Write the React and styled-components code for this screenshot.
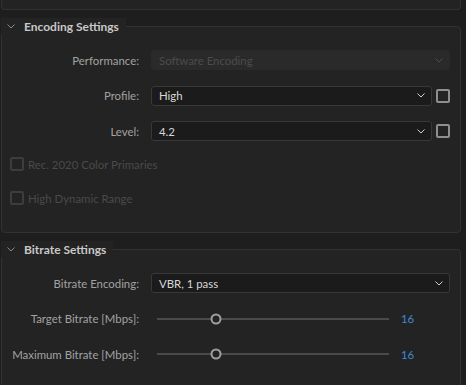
import React from "react";
import styled, { createGlobalStyle } from "styled-components";

const Global = createGlobalStyle`
  html, body { margin: 0; padding: 0; background: #1e1e1e; }
  body { font-family: Lato, "Open Sans", sans-serif; font-size: 11px; }
`;

const Page = styled.div`
  width: 466px;
  height: 385px;
  overflow: hidden;
  box-sizing: border-box;
  padding: 0 5px 0 1px;
  display: flex;
  flex-direction: column;
  gap: 8px;
  background: #1e1e1e;
`;

const TopPanel = styled.div`
  height: 9px;
  flex: none;
  background: #232323;
  border: 1px solid #323232;
  border-top: none;
  border-radius: 0 0 4px 4px;
`;

const Section = styled.fieldset`
  margin: 0;
  min-inline-size: 0;
  flex: none;
  padding: 15px 10px ${(p) => p.$pb}px 0;
  background: #232323;
  border: 1px solid #323232;
  border-radius: 4px;
`;

const Legend = styled.legend`
  display: flex;
  align-items: center;
  gap: 9px;
  height: 17px;
  padding: 0 7px 0 6px;
  margin-left: -1px;
  background: #232323;
  color: #c8c8c8;
  font-size: 12px;
  font-weight: 700;
  line-height: 17px;
`;

const Chevron = ({ color = "#8a8a8a", size = 8 }) => (
  <svg width={size} height={size / 2 + 1} viewBox="0 0 8 5" fill="none">
    <path d="M0.5 0.5 L4 4 L7.5 0.5" stroke={color} strokeWidth="1" />
  </svg>
);

const Form = styled.div`
  display: grid;
  grid-template-columns: 137px 1fr;
  column-gap: 12px;
  row-gap: 15.5px;
  grid-auto-rows: 20px;
  align-items: center;
`;

const Label = styled.div`
  text-align: right;
  color: #a2a2a2;
  font-size: 11.4px;
  white-space: nowrap;
`;

const Control = styled.div`
  display: flex;
  align-items: center;
  gap: 4px;
  height: 100%;
`;

const Select = styled.div`
  flex: 1;
  height: 20px;
  box-sizing: border-box;
  display: flex;
  align-items: center;
  justify-content: space-between;
  padding: 0 6px 0 7px;
  border-radius: 3px;
  font-size: 11.4px;
  border: 1px solid ${(p) => (p.$disabled ? "#2a2a2a" : "#383838")};
  background: ${(p) => (p.$disabled ? "#2a2a2a" : "#1b1b1b")};
  color: ${(p) => (p.$disabled ? "#4c4c4c" : "#d8d8d8")};
`;

const Box = styled.span`
  width: 14px;
  height: 14px;
  flex: none;
  box-sizing: border-box;
  border: 2px solid ${(p) => (p.$disabled ? "#3d3d3d" : "#8e8e8e")};
  border-radius: 2px;
`;

const CheckList = styled.div`
  display: flex;
  flex-direction: column;
  gap: 14px;
  margin-top: 13px;
  padding-left: 8px;
`;

const CheckRow = styled.div`
  height: 20px;
  display: flex;
  align-items: center;
  gap: 4px;
  font-size: 11.4px;
  color: ${(p) => (p.$disabled ? "#4a4a4a" : "#a2a2a2")};
`;

const SliderControl = styled.div`
  display: grid;
  grid-template-columns: 1fr 49px;
  column-gap: 6px;
  align-items: center;
  height: 100%;
`;

const SliderBox = styled.div`
  padding: 0 6px;
  height: 100%;
  display: flex;
  align-items: center;
`;

const Track = styled.div`
  position: relative;
  flex: 1;
  height: 2px;
  background: #4a4a4a;
`;

const Thumb = styled.span`
  position: absolute;
  top: 50%;
  width: 11px;
  height: 11px;
  box-sizing: border-box;
  border-radius: 50%;
  border: 2px solid #a0a0a0;
  background: #232323;
  transform: translate(-50%, -50%);
`;

const Value = styled.span`
  color: #3f8ad6;
  font-size: 11.4px;
`;

const Slider = ({ value, min, max }) => (
  <SliderControl>
    <SliderBox>
      <Track>
        <Thumb style={{ left: `${((value - min) / (max - min)) * 100}%` }} />
      </Track>
    </SliderBox>
    <Value>{value}</Value>
  </SliderControl>
);

export default function App() {
  return (
    <Page>
      <Global />
      <TopPanel />
      <Section $pb={24}>
        <Legend>
          <Chevron />
          <span>Encoding Settings</span>
        </Legend>
        <Form>
          <Label>Performance:</Label>
          <Control>
            <Select $disabled>
              <span>Software Encoding</span>
              <Chevron color="#4c4c4c" />
            </Select>
          </Control>
          <Label>Profile:</Label>
          <Control>
            <Select>
              <span>High</span>
              <Chevron color="#cfcfcf" />
            </Select>
            <Box />
          </Control>
          <Label>Level:</Label>
          <Control>
            <Select>
              <span>4.2</span>
              <Chevron color="#cfcfcf" />
            </Select>
            <Box />
          </Control>
        </Form>
        <CheckList>
          <CheckRow $disabled>
            <Box $disabled />
            <span>Rec. 2020 Color Primaries</span>
          </CheckRow>
          <CheckRow $disabled>
            <Box $disabled />
            <span>High Dynamic Range</span>
          </CheckRow>
        </CheckList>
      </Section>
      <Section $pb={24}>
        <Legend>
          <Chevron />
          <span>Bitrate Settings</span>
        </Legend>
        <Form>
          <Label>Bitrate Encoding:</Label>
          <Control>
            <Select>
              <span>VBR, 1 pass</span>
              <Chevron color="#cfcfcf" />
            </Select>
          </Control>
          <Label>Target Bitrate [Mbps]:</Label>
          <Slider value={16} min={1} max={60} />
          <Label>Maximum Bitrate [Mbps]:</Label>
          <Slider value={16} min={1} max={60} />
        </Form>
      </Section>
    </Page>
  );
}
